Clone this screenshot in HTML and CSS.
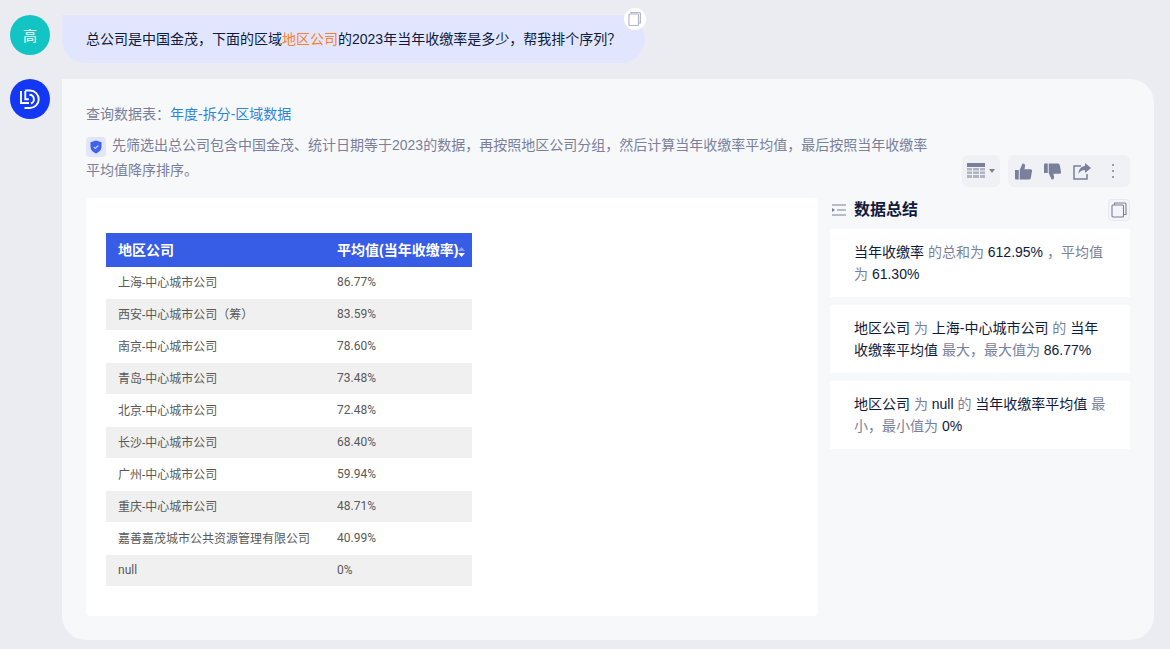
FILE: index.html
```html
<!DOCTYPE html>
<html lang="zh-CN">
<head>
<meta charset="utf-8">
<title>数据问答</title>
<link rel="stylesheet" href="styles.css">
</head>
<body>
<main class="chat">
  <section class="row row-user">
    <div class="avatar avatar-user">高</div>
    <div class="bubble">
      <p class="question">总公司是中国金茂，下面的区域<span class="hl">地区公司</span>的2023年当年收缴率是多少，帮我排个序列？</p>
      <button class="copy-round" aria-label="复制">
        <svg width="14" height="16" viewBox="0 0 14 16"><rect x="1" y="3" width="9.5" height="11.5" rx="1" fill="none" stroke="#b4b7cb" stroke-width="1.2"/><path d="M3 3V1.600h8.400a1 1 0 0 1 1 1v9.400h-2" fill="none" stroke="#b4b7cb" stroke-width="1.200"/></svg>
      </button>
    </div>
  </section>
  <section class="row">
    <div class="avatar avatar-bot">
      <svg width="24" height="24" viewBox="0 0 24 24" fill="none" stroke="#fff" stroke-width="1.900"><path d="M3 4v12h8"/><path d="M7 3.500h5a8.750 8.750 0 0 1 0 17.500H6.500"/><path d="M7.300 4v8.300h3.500"/><path d="M11.500 7.800a4.500 4.500 0 0 1 1.500 8.700"/></svg>
    </div>
    <div class="card">
      <div class="head">
        <div class="desc">
          <p class="source">查询数据表：<span class="link">年度-拆分-区域数据</span></p>
          <p class="sql"><span class="shield">
            <svg width="12" height="14" viewBox="0 0 12 14"><path d="M6 0.500l5.500 1.800v4.700c0 3-2.500 5.200-5.500 6.500C3 12.200.5 10 .5 7V2.300z" fill="#3f63ee"/><path d="M3.700 6.800l1.700 1.700 3-3" fill="none" stroke="#c9d4ff" stroke-width="1.100"/></svg>
          </span>先筛选出总公司包含中国金茂、统计日期等于2023的数据，再按照地区公司分组，然后计算当年收缴率平均值，最后按照当年收缴率平均值降序排序。</p>
        </div>
        <div class="tools">
          <div class="tool-group tool-table">
            <svg width="18" height="16" viewBox="0 0 18 16"><rect width="18" height="4" fill="#7a7f9c"/><path d="M0 5h5v2.500H0zM6 5h6v2.500H6zM13 5h5v2.500h-5zM0 8.500h5V11H0zM6 8.500h6V11H6zM13 8.500h5V11h-5zM0 12h5v3H0zM6 12h6v3H6zM13 12h5v3h-5z" fill="#b0b3c4"/></svg>
            <svg width="6" height="4" viewBox="0 0 6 4"><path d="M0 0h6L3 4z" fill="#7a7f9c"/></svg>
          </div>
          <div class="tool-group tool-actions">
            <svg width="17" height="17" viewBox="0 0 18 17"><path d="M0 7h4v10H1a1 1 0 0 1-1-1zM5 7l3-7c2 0 3 1 2.600 3L10 6h6a2 2 0 0 1 2 2.300l-1.300 7A2 2 0 0 1 14.700 17H5z" fill="#7a7f9c"/></svg>
            <svg width="17" height="17" viewBox="0 0 18 17"><path d="M0 10h4V0H1a1 1 0 0 0-1 1zM5 10l3 7c2 0 3-1 2.600-3L10 11h6a2 2 0 0 0 2-2.300l-1.300-7A2 2 0 0 0 14.700 0H5z" fill="#7a7f9c"/></svg>
            <svg width="18" height="17" viewBox="0 0 18 17"><path d="M8 3H1v13h13v-5" fill="none" stroke="#7a7f9c" stroke-width="1.500"/><path d="M12 0l6 5-6 5V7C9 7 7 8 5.500 11 5.500 6.500 8 3.500 12 3z" fill="#7a7f9c"/></svg>
            <svg width="4" height="16" viewBox="0 0 4 16"><circle cx="2" cy="2" r="1" fill="#7a7f9c"/><circle cx="2" cy="8" r="1" fill="#7a7f9c"/><circle cx="2" cy="14" r="1" fill="#7a7f9c"/></svg>
          </div>
        </div>
      </div>
      <div class="body">
        <div class="panel">
          <table class="data">
            <thead>
              <tr><th class="c1">地区公司</th><th class="c2">平均值(当年收缴率)<svg class="sort" width="7" height="10" viewBox="0 0 7 10"><path d="M3.500 0L7 4H0z" fill="#8ea4f2"/><path d="M3.500 10L7 6H0z" fill="#fff"/></svg></th></tr>
            </thead>
            <tbody>
              <tr><td>上海-中心城市公司</td><td>86.77%</td></tr>
              <tr><td>西安-中心城市公司（筹）</td><td>83.59%</td></tr>
              <tr><td>南京-中心城市公司</td><td>78.60%</td></tr>
              <tr><td>青岛-中心城市公司</td><td>73.48%</td></tr>
              <tr><td>北京-中心城市公司</td><td>72.48%</td></tr>
              <tr><td>长沙-中心城市公司</td><td>68.40%</td></tr>
              <tr><td>广州-中心城市公司</td><td>59.94%</td></tr>
              <tr><td>重庆-中心城市公司</td><td>48.71%</td></tr>
              <tr><td>嘉善嘉茂城市公共资源管理有限公司</td><td>40.99%</td></tr>
              <tr><td>null</td><td>0%</td></tr>
            </tbody>
          </table>
        </div>
        <aside class="summary">
          <div class="summary-head">
            <svg width="14" height="12" viewBox="0 0 14 12"><path d="M0 1h14M5 6h9M0 11h14" stroke="#7a7f9c" stroke-width="1"/><path d="M0 4l3 2-3 2z" fill="#7a7f9c"/></svg>
            <h2>数据总结</h2>
            <button class="copy-square" aria-label="复制">
              <svg width="16" height="16" viewBox="0 0 16 16"><rect x="1" y="3" width="11.500" height="12" rx="1" fill="none" stroke="#7a7f9c" stroke-width="1.100"/><path d="M3.500 3V1h10.500a1 1 0 0 1 1 1v10.500h-2.500" fill="none" stroke="#7a7f9c" stroke-width="1.100"/></svg>
            </button>
          </div>
          <div class="note"><b>当年收缴率</b> 的总和为 <b>612.95%</b> ，平均值为 <b>61.30%</b></div>
          <div class="note"><b>地区公司</b> 为 <b>上海-中心城市公司</b> 的 <b>当年收缴率平均值</b> 最大，最大值为 <b>86.77%</b></div>
          <div class="note"><b>地区公司</b> 为 <b>null</b> 的 <b>当年收缴率平均值</b> 最小，最小值为 <b>0%</b></div>
        </aside>
      </div>
    </div>
  </section>
</main>
</body>
</html>
```

FILE: styles.css
```css
* { box-sizing: border-box; }
html, body { margin: 0; height: 100%; }
body {
  background: #ebecf2;
  font-family: "Liberation Sans", "Noto Sans CJK SC", sans-serif;
  font-size: 14px;
  color: #0f1a3c;
  overflow: hidden;
}
p, h2 { margin: 0; }
.chat { display: flex; flex-direction: column; gap: 16px; padding: 15px 16px 0 10px; }
.row { display: flex; gap: 12px; align-items: flex-start; }
.avatar {
  flex: none; width: 40px; height: 40px; border-radius: 50%;
  display: flex; align-items: center; justify-content: center;
  color: #fff; font-size: 14px;
}
.avatar-user { background: #13c4c4; }
.avatar-bot { background: #1238f5; }
.bubble {
  position: relative; width: 583px; height: 48px; padding: 0 24px;
  display: flex; align-items: center;
  background: #e1e6fe; border-radius: 0 24px 24px 24px;
}
.question { line-height: 48px; white-space: nowrap; }
.hl { color: #fa7f2e; }
.copy-round {
  position: absolute; right: -1px; top: -7px; width: 22px; height: 22px;
  padding: 0; border: 0; border-radius: 50%; background: #fff;
  display: flex; align-items: center; justify-content: center;
}
.card {
  width: 1092px; height: 561px; padding: 24px;
  background: #f7f8fa; border-radius: 0 24px 24px 24px;
  display: flex; flex-direction: column;
}
.head { display: flex; justify-content: space-between; align-items: flex-start; height: 83px; }
.desc { width: 846px; color: #7a7f9c; }
.source { line-height: 22px; }
.link { color: #2b87de; }
.sql { margin-top: 8px; line-height: 25px; }
.shield {
  display: inline-flex; align-items: center; justify-content: center;
  width: 20px; height: 20px; margin-right: 6px; vertical-align: -4px;
  background: #e1e6fe; border-radius: 4px;
}
.tools { display: flex; gap: 8px; align-self: flex-end; margin-bottom: -1px; }
.tool-group {
  height: 32px; display: flex; align-items: center;
  background: #f0f1f4; border-radius: 6px;
}
.tool-table { width: 38px; padding-left: 5px; gap: 4px; }
.tool-actions { width: 122px; padding-left: 7px; gap: 12px; }
.tool-actions svg:last-child { margin-left: 8px; }
.body { display: flex; gap: 12px; margin-top: 12px; flex: 1; }
.panel {
  width: 732px; height: 418px; padding: 35px 20px;
  background: #fff; border-radius: 4px;
}
.data {
  width: 366px; border-collapse: separate; border-spacing: 0; table-layout: fixed;
  font-family: Roboto, "Noto Sans CJK SC", sans-serif; font-size: 12px; color: #595959;
}
.data th {
  height: 34px; background: #375ce6; color: #fff; font-size: 14px; font-weight: 700;
  font-family: "Liberation Sans", "Noto Sans CJK SC", sans-serif;
  text-align: left; padding: 0 0 2px 12px; white-space: nowrap;
}
.data th.c1 { width: 219px; }
.data td {
  height: 32px; padding: 0 0 2px 12px; white-space: nowrap;
  border-bottom: 1px solid transparent; background-clip: padding-box;
}
.data tbody tr:nth-child(even) td { background-color: #f0f0f0; }
.sort { margin-left: 0; vertical-align: -2px; }
.summary { width: 300px; display: flex; flex-direction: column; gap: 8px; }
.summary-head { display: flex; align-items: center; height: 23px; padding-left: 2px; }
.summary-head svg { flex: none; }
.summary-head h2 { margin-left: 8px; font-size: 16px; line-height: 22px; font-weight: 700; color: #0f1a3c; }
.copy-square {
  margin-left: auto; width: 22px; height: 22px; padding: 0;
  display: flex; align-items: center; justify-content: center;
  background: #f4f5f9; border: 1px solid #e8e9f0; border-radius: 4px;
}
.note {
  height: 68px; padding: 12px 24px; background: #fff;
  color: #7a7f9c; line-height: 22px;
}
.note b { font-weight: 400; color: #0f1a3c; }
```
